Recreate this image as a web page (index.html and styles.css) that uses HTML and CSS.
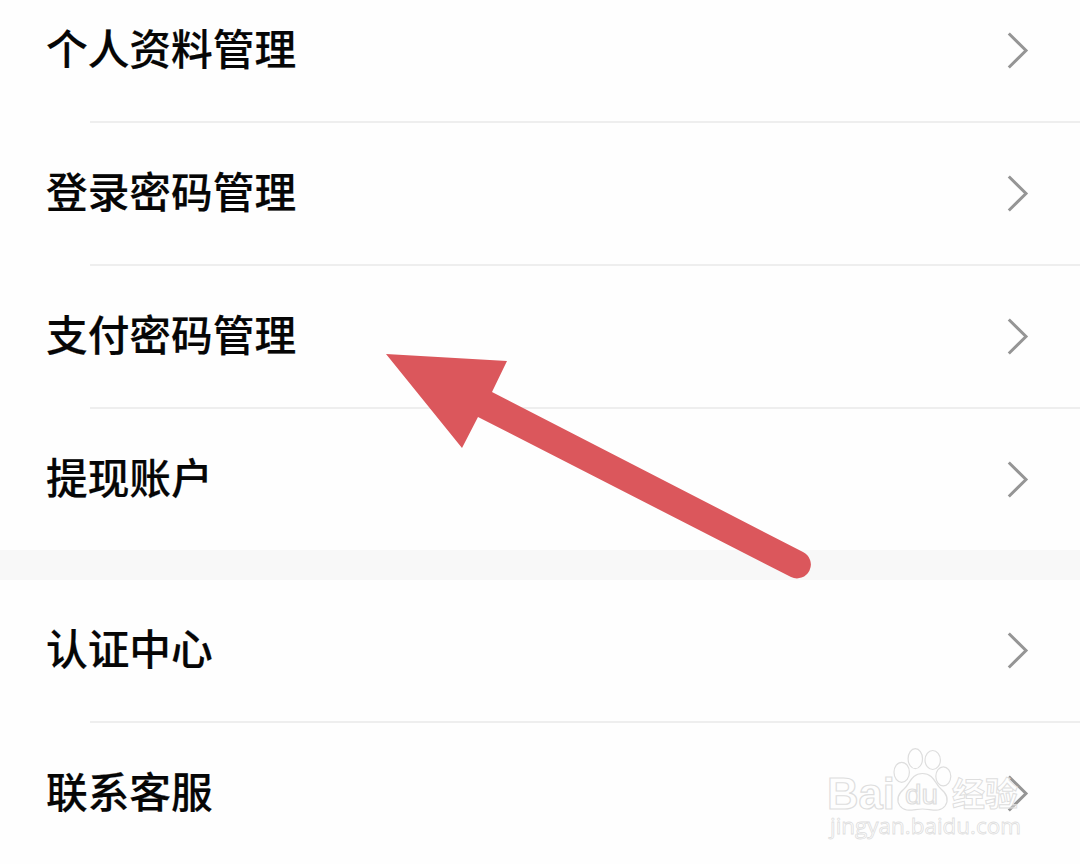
FILE: index.html
```
<!DOCTYPE html>
<html lang="zh-CN">
<head>
  <meta charset="UTF-8">
  <title>账户管理</title>
  <link rel="stylesheet" href="styles.css">
</head>
<body>
  <svg class="defs">
    <symbol id="chevron" viewBox="0 0 24 40">
      <path d="M2.800 2.500 L20 19.500 L2.800 36.500" fill="none" stroke="#959595" stroke-width="3"/>
    </symbol>
  </svg>

  <main class="page">
    <ul class="group">
      <li class="row"><span class="label">个人资料管理</span><svg class="chevron"><use href="#chevron"/></svg></li>
      <li class="row"><span class="label">登录密码管理</span><svg class="chevron"><use href="#chevron"/></svg></li>
      <li class="row"><span class="label">支付密码管理</span><svg class="chevron"><use href="#chevron"/></svg></li>
      <li class="row"><span class="label">提现账户</span><svg class="chevron"><use href="#chevron"/></svg></li>
    </ul>
    <ul class="group">
      <li class="row"><span class="label">认证中心</span><svg class="chevron"><use href="#chevron"/></svg></li>
      <li class="row"><span class="label">联系客服</span><svg class="chevron"><use href="#chevron"/></svg></li>
    </ul>

    <svg class="arrow" viewBox="0 0 426 226">
      <path d="M0 0 L121 7 L106 38 L417 198 A13.5 13.5 0 0 1 405 223 L92 63 L76 94 Z" fill="#db575c"/>
    </svg>

    <svg class="watermark" viewBox="0 0 210 104">
      <g class="outline">
        <text class="brand" x="3" y="63" textLength="68" lengthAdjust="spacingAndGlyphs">Bai</text>
        <ellipse cx="77.700" cy="26.300" rx="7.700" ry="10"/>
        <ellipse cx="91.300" cy="12.700" rx="7.200" ry="10"/>
        <ellipse cx="108.700" cy="14" rx="7.700" ry="9.500"/>
        <ellipse cx="119.300" cy="30.300" rx="7.500" ry="9.500"/>
        <path d="M98.500 27.500 C87 27.500 86 38 80 43 C74 48 72 54 76 60 C81 67 90 63 98.500 63 C107 63 116 67 121 60 C125 54 123 48 117 43 C111 38 110 27.500 98.500 27.500 Z"/>
        <text class="du" x="81" y="58" textLength="33" lengthAdjust="spacingAndGlyphs">du</text>
        <text class="cn" x="128" y="60">经验</text>
        <text class="url" x="6" y="88" textLength="191" lengthAdjust="spacingAndGlyphs">jingyan.baidu.com</text>
      </g>
    </svg>
  </main>
</body>
</html>
```
FILE: styles.css
```
body {
  margin: 0;
  background-color: #fefefe;
  font-family: "Noto Sans CJK SC", sans-serif;
  color: #060606;
}
.defs {
  display: none;
}
.page {
  position: relative;
  height: 864px;
  overflow: hidden;
}
.group {
  list-style: none;
  margin: 0;
  padding: 0;
}
/* list is scrolled a little */
.group:first-child {
  margin-top: -20px;
}
.group + .group {
  border-top: 30px solid #f8f8f8;
}
.row {
  display: flex;
  flex-wrap: wrap;
  align-items: center;
  justify-content: space-between;
  padding: 0 50px 0 46px;
}
.label {
  padding-bottom: 6px;
  font-size: 41.7px;
  font-weight: 500;
  line-height: 135px;
  -webkit-text-stroke: 0.2px #060606;
}
.row:not(:last-child)::after {
  content: "";
  flex: 0 0 calc(100% + 6px);
  height: 2px;
  margin-left: 44px;
  margin-right: -50px;
  background-color: #eeeeee;
}
.chevron {
  width: 24px;
  height: 40px;
}
.arrow {
  position: absolute;
  left: 386px;
  top: 354px;
  width: 426px;
  height: 226px;
}
.watermark {
  position: absolute;
  left: 824px;
  top: 746px;
  width: 210px;
  height: 104px;
}
.outline {
  fill: rgba(255, 255, 255, 0.35);
  stroke: #dedede;
  stroke-width: 1.2px;
}
.brand {
  font: bold 44px "Liberation Sans", sans-serif;
}
.du {
  font: 27px "Liberation Sans", sans-serif;
}
.cn {
  font: bold 33px "Noto Sans CJK SC", sans-serif;
  stroke-width: 1px;
}
.url {
  font: 22px "Open Sans", sans-serif;
  stroke-width: 0.8px;
}
```
